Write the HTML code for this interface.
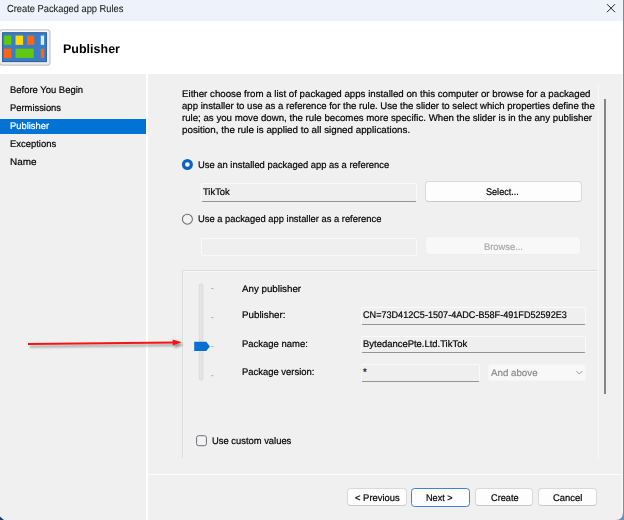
<!DOCTYPE html>
<html><head><meta charset="utf-8">
<style>
html,body{margin:0;padding:0;}
body{width:624px;height:520px;overflow:hidden;position:relative;background:#f0f0f0;font-family:"Liberation Sans",sans-serif;}
.a{position:absolute;box-sizing:border-box;}
.t{position:absolute;white-space:pre;font-family:"Liberation Sans",sans-serif;text-rendering:geometricPrecision;}
</style></head><body>
<!-- title bar -->
<div class="a" style="left:0;top:0;width:624px;height:21px;background:#edf2fb"></div>
<!-- header -->
<div class="a" style="left:0;top:21px;width:624px;height:52.5px;background:#ffffff"></div>
<!-- nav separator -->
<div class="a" style="left:146px;top:73px;width:1.6px;height:447px;background:#ffffff"></div>
<!-- footer separator -->
<div class="a" style="left:147px;top:474px;width:477px;height:1px;background:#fcfcfc"></div>
<!-- selected nav -->
<div class="a" style="left:0;top:119px;width:146px;height:15px;background:#0073d5"></div>
<!-- window right border -->
<div class="a" style="left:621.9px;top:73px;width:1px;height:447px;background:#f9f9f9"></div>
<div class="a" style="left:622.8px;top:0;width:1.2px;height:520px;background:#7e8b9b"></div>
<!-- close X -->
<svg class="a" style="left:0;top:0" width="624" height="20"><path d="M607 4.2 L615 12.2 M615 4.2 L607 12.2" stroke="#202020" stroke-width="1" fill="none"/></svg>
<!-- icon -->
<svg class="a" style="left:0;top:0" width="60" height="72">
  <rect x="-1" y="29.2" width="51.6" height="36.6" rx="3.5" fill="#c6c6c6"/>
  <rect x="0" y="30.2" width="49.4" height="34.2" rx="2.5" fill="#ebebeb"/>
  <rect x="0.8" y="30.8" width="47.6" height="2" fill="#f6f6f6"/>
  <rect x="2.6" y="32.7" width="43.8" height="28.9" fill="#3b7dc4" stroke="#2b5a98" stroke-width="1"/>
  <rect x="3.9" y="35.6" width="7.5" height="9.3" fill="#5ec90a"/>
  <rect x="15.5" y="35.6" width="7.6" height="9.3" fill="#ffda00"/>
  <rect x="27" y="35.6" width="7.3" height="9.3" fill="#ff6410"/>
  <rect x="40.8" y="35.6" width="3.3" height="9.3" fill="#d4ecff"/>
  <rect x="3.9" y="48.7" width="7.5" height="9.2" fill="#ff6410"/>
  <rect x="15.5" y="48.7" width="18.2" height="9.2" fill="#62c812"/>
  <rect x="40.8" y="48.7" width="3.3" height="9.2" fill="#ff6410"/>
</svg>
<!-- radios -->
<svg class="a" style="left:0;top:0" width="624" height="520">
  <circle cx="187.4" cy="164.5" r="5.5" fill="#0a64c0"/>
  <circle cx="187.4" cy="164.5" r="2.3" fill="#ffffff"/>
  <circle cx="187.4" cy="219.2" r="5" fill="#f3f3f3" stroke="#707070" stroke-width="1.1"/>
  <!-- group box lines -->
  <rect x="182" y="270" width="416" height="1" fill="#dcdcdc"/>
  <rect x="183" y="271" width="415" height="1" fill="#f8f8f8"/>
  <rect x="182" y="270" width="1" height="188" fill="#dcdcdc"/>
  <rect x="183" y="271" width="1" height="187" fill="#f4f4f4"/>
  <rect x="597.8" y="85" width="1" height="373.5" fill="#fafafa"/>
  <!-- scroll thumb -->
  <rect x="604" y="99" width="2" height="295" fill="#858585"/>
  <!-- slider track -->
  <rect x="199.3" y="284" width="3.6" height="96" rx="1.5" fill="#e4e4e4" stroke="#d2d2d2" stroke-width="0.6"/>
  <!-- ticks -->
  <rect x="211" y="288" width="2.5" height="1" fill="#b0b7bf"/>
  <rect x="211" y="317.1" width="2.5" height="1" fill="#b0b7bf"/>
  <rect x="211" y="346.1" width="2.5" height="1" fill="#b0b7bf"/>
  <rect x="211" y="375.2" width="2.5" height="1" fill="#b0b7bf"/>
  <!-- slider thumb -->
  <path d="M194.2 341.8 L206.3 341.8 L209.9 346.4 L206.3 351 L194.2 351 Z" fill="#0a6fd2"/>
  <!-- checkbox -->
  <rect x="196.6" y="435.7" width="9.8" height="10" rx="2" fill="#f3f3f3" stroke="#6c6c72" stroke-width="1"/>
  <!-- red arrow shadow -->
  <g opacity="0.5" transform="translate(2,2.5)" filter="url(#blur)">
    <path d="M28 344 L174 342.5" stroke="#505050" stroke-width="2"/>
    <path d="M172.7 339.6 L181.8 342.3 L172.7 345.6 Z" fill="#404040"/>
  </g>
  <defs><filter id="blur" x="-5%" y="-200%" width="110%" height="500%"><feGaussianBlur stdDeviation="0.9"/></filter></defs>
  <path d="M28 344 L174 342.5" stroke="#f51414" stroke-width="2.2"/>
  <path d="M172.7 339.6 L181.8 342.3 L172.7 345.6 Z" fill="#f51414"/>
</svg>
<!-- textboxes -->
<div class="a" style="left:201px;top:183px;width:216px;height:19px;background:#efefef;border:1px solid #fafafa;border-bottom:1px solid #949494;border-radius:2px"></div>
<div class="a" style="left:201px;top:238px;width:216px;height:17.5px;background:#efefef;border:1px solid #f9f9f9;border-radius:2px"></div>
<div class="a" style="left:360.7px;top:307.3px;width:225.2px;height:17.8px;background:#efefef;border:1px solid #fafafa;border-bottom:1px solid #949494;border-radius:2px"></div>
<div class="a" style="left:360.7px;top:335.5px;width:225.2px;height:17.3px;background:#efefef;border:1px solid #fafafa;border-bottom:1px solid #949494;border-radius:2px"></div>
<div class="a" style="left:360.7px;top:364.3px;width:119.7px;height:18px;background:#efefef;border:1px solid #fafafa;border-bottom:1px solid #949494;border-radius:2px"></div>
<div class="a" style="left:488.3px;top:364px;width:97.3px;height:17.3px;background:#f8f8f8;border:1px solid #f5f5f5;border-radius:2px"></div>
<!-- buttons -->
<div class="a" style="left:424.5px;top:181px;width:157px;height:21px;background:#fdfdfd;border:1px solid #d9d9d9;border-bottom-color:#c9c9c9;border-radius:4px"></div>
<div class="a" style="left:425.4px;top:236.3px;width:155.8px;height:19px;background:#f8f8f8;border:1px solid #eeeeee;border-radius:4px"></div>
<div class="a" style="left:347.4px;top:488.3px;width:59.2px;height:18.2px;background:#fdfdfd;border:1px solid #d9d9d9;border-bottom-color:#c9c9c9;border-radius:4px"></div>
<div class="a" style="left:410.8px;top:488px;width:59.5px;height:18.8px;background:#fdfdfd;border:1.5px solid #3a86d4;border-radius:3.5px"></div>
<div class="a" style="left:474.9px;top:488.3px;width:58.4px;height:18.2px;background:#fdfdfd;border:1px solid #d9d9d9;border-bottom-color:#c9c9c9;border-radius:4px"></div>
<div class="a" style="left:538.4px;top:488.3px;width:59px;height:18.2px;background:#fdfdfd;border:1px solid #d9d9d9;border-bottom-color:#c9c9c9;border-radius:4px"></div>
<svg class="a" style="left:0;top:0" width="624" height="520"><path d="M576.3 371 L579.3 374 L582.3 371" stroke="#8e8e8e" stroke-width="0.9" fill="none"/></svg>
<div class="t" style="left:6.50px;top:5.37px;font-size:10.2px;line-height:10.2px;font-weight:normal;color:#1e1e1e;transform:scaleX(0.9134);transform-origin:0 0;-webkit-text-stroke:0.1px #1e1e1e">Create Packaged app Rules</div>
<div class="t" style="left:62.90px;top:42.82px;font-size:12.5px;line-height:12.5px;font-weight:bold;color:#000000;transform:scaleX(1.0001);transform-origin:0 0;-webkit-text-stroke:0px #000000">Publisher</div>
<div class="t" style="left:10.00px;top:85.53px;font-size:9.65px;line-height:9.65px;font-weight:normal;color:#000000;transform:scaleX(0.9810);transform-origin:0 0;-webkit-text-stroke:0.2px #000000">Before You Begin</div>
<div class="t" style="left:10.00px;top:103.53px;font-size:9.65px;line-height:9.65px;font-weight:normal;color:#000000;transform:scaleX(0.9733);transform-origin:0 0;-webkit-text-stroke:0.2px #000000">Permissions</div>
<div class="t" style="left:10.00px;top:121.53px;font-size:9.65px;line-height:9.65px;font-weight:normal;color:#ffffff;transform:scaleX(0.9726);transform-origin:0 0;-webkit-text-stroke:0.2px #ffffff">Publisher</div>
<div class="t" style="left:10.00px;top:139.53px;font-size:9.65px;line-height:9.65px;font-weight:normal;color:#000000;transform:scaleX(0.9795);transform-origin:0 0;-webkit-text-stroke:0.2px #000000">Exceptions</div>
<div class="t" style="left:10.00px;top:157.53px;font-size:9.65px;line-height:9.65px;font-weight:normal;color:#000000;transform:scaleX(1.0307);transform-origin:0 0;-webkit-text-stroke:0.2px #000000">Name</div>
<div class="t" style="left:182.00px;top:89.93px;font-size:9.65px;line-height:9.65px;font-weight:normal;color:#000000;transform:scaleX(1.0085);transform-origin:0 0;-webkit-text-stroke:0.2px #000000">Either choose from a list of packaged apps installed on this computer or browse for a packaged</div>
<div class="t" style="left:182.00px;top:102.03px;font-size:9.65px;line-height:9.65px;font-weight:normal;color:#000000;transform:scaleX(0.9967);transform-origin:0 0;-webkit-text-stroke:0.2px #000000">app installer to use as a reference for the rule. Use the slider to select which properties define the</div>
<div class="t" style="left:182.00px;top:114.13px;font-size:9.65px;line-height:9.65px;font-weight:normal;color:#000000;transform:scaleX(1.0044);transform-origin:0 0;-webkit-text-stroke:0.2px #000000">rule; as you move down, the rule becomes more specific. When the slider is in the any publisher</div>
<div class="t" style="left:182.00px;top:126.03px;font-size:9.65px;line-height:9.65px;font-weight:normal;color:#000000;transform:scaleX(1.0178);transform-origin:0 0;-webkit-text-stroke:0.2px #000000">position, the rule is applied to all signed applications.</div>
<div class="t" style="left:197.80px;top:161.03px;font-size:9.65px;line-height:9.65px;font-weight:normal;color:#000000;transform:scaleX(0.9760);transform-origin:0 0;-webkit-text-stroke:0.2px #000000">Use an installed packaged app as a reference</div>
<div class="t" style="left:202.80px;top:187.53px;font-size:9.65px;line-height:9.65px;font-weight:normal;color:#000000;transform:scaleX(0.9734);transform-origin:0 0;-webkit-text-stroke:0.2px #000000">TikTok</div>
<div class="t" style="left:486.20px;top:187.93px;font-size:9.65px;line-height:9.65px;font-weight:normal;color:#000000;transform:scaleX(0.9443);transform-origin:0 0;-webkit-text-stroke:0.2px #000000">Select...</div>
<div class="t" style="left:197.80px;top:215.13px;font-size:9.65px;line-height:9.65px;font-weight:normal;color:#000000;transform:scaleX(0.9735);transform-origin:0 0;-webkit-text-stroke:0.2px #000000">Use a packaged app installer as a reference</div>
<div class="t" style="left:483.70px;top:243.03px;font-size:9.65px;line-height:9.65px;font-weight:normal;color:#a8a8a8;transform:scaleX(0.9710);transform-origin:0 0;-webkit-text-stroke:0.2px #a8a8a8">Browse...</div>
<div class="t" style="left:241.70px;top:284.73px;font-size:9.65px;line-height:9.65px;font-weight:normal;color:#000000;transform:scaleX(1.0133);transform-origin:0 0;-webkit-text-stroke:0.2px #000000">Any publisher</div>
<div class="t" style="left:241.70px;top:310.73px;font-size:9.65px;line-height:9.65px;font-weight:normal;color:#000000;transform:scaleX(1.0160);transform-origin:0 0;-webkit-text-stroke:0.2px #000000">Publisher:</div>
<div class="t" style="left:241.70px;top:339.73px;font-size:9.65px;line-height:9.65px;font-weight:normal;color:#000000;transform:scaleX(0.9848);transform-origin:0 0;-webkit-text-stroke:0.2px #000000">Package name:</div>
<div class="t" style="left:241.70px;top:367.83px;font-size:9.65px;line-height:9.65px;font-weight:normal;color:#000000;transform:scaleX(0.9801);transform-origin:0 0;-webkit-text-stroke:0.2px #000000">Package version:</div>
<div class="t" style="left:363.00px;top:310.93px;font-size:9.65px;line-height:9.65px;font-weight:normal;color:#000000;transform:scaleX(0.9442);transform-origin:0 0;-webkit-text-stroke:0.2px #000000">CN=73D412C5-1507-4ADC-B58F-491FD52592E3</div>
<div class="t" style="left:363.00px;top:340.23px;font-size:9.65px;line-height:9.65px;font-weight:normal;color:#000000;transform:scaleX(0.9812);transform-origin:0 0;-webkit-text-stroke:0.2px #000000">BytedancePte.Ltd.TikTok</div>
<div class="t" style="left:363.00px;top:367.63px;font-size:9.65px;line-height:9.65px;font-weight:normal;color:#000000;transform:scaleX(1.0000);transform-origin:0 0;-webkit-text-stroke:0.2px #000000">*</div>
<div class="t" style="left:490.80px;top:368.73px;font-size:9.65px;line-height:9.65px;font-weight:normal;color:#8a8a8a;transform:scaleX(1.0116);transform-origin:0 0;-webkit-text-stroke:0.2px #8a8a8a">And above</div>
<div class="t" style="left:211.80px;top:436.83px;font-size:9.65px;line-height:9.65px;font-weight:normal;color:#000000;transform:scaleX(0.9755);transform-origin:0 0;-webkit-text-stroke:0.2px #000000">Use custom values</div>
<div class="t" style="left:354.60px;top:494.33px;font-size:9.65px;line-height:9.65px;font-weight:normal;color:#000000;transform:scaleX(0.9776);transform-origin:0 0;-webkit-text-stroke:0.2px #000000">&lt; Previous</div>
<div class="t" style="left:426.40px;top:494.33px;font-size:9.65px;line-height:9.65px;font-weight:normal;color:#000000;transform:scaleX(0.9450);transform-origin:0 0;-webkit-text-stroke:0.2px #000000">Next &gt;</div>
<div class="t" style="left:490.60px;top:494.33px;font-size:9.65px;line-height:9.65px;font-weight:normal;color:#000000;transform:scaleX(0.9532);transform-origin:0 0;-webkit-text-stroke:0.2px #000000">Create</div>
<div class="t" style="left:553.00px;top:494.33px;font-size:9.65px;line-height:9.65px;font-weight:normal;color:#000000;transform:scaleX(0.9791);transform-origin:0 0;-webkit-text-stroke:0.2px #000000">Cancel</div>
<svg class="a" style="left:0;top:0" width="624" height="520">
  <path d="M616 520 Q622.8 520 622.8 513 L624 513 L624 520 Z" fill="#6f8fb8"/>
  <path d="M0 516.5 Q2 518 4 520 L0 520 Z" fill="#1d3f78"/>
</svg>
</body></html>
